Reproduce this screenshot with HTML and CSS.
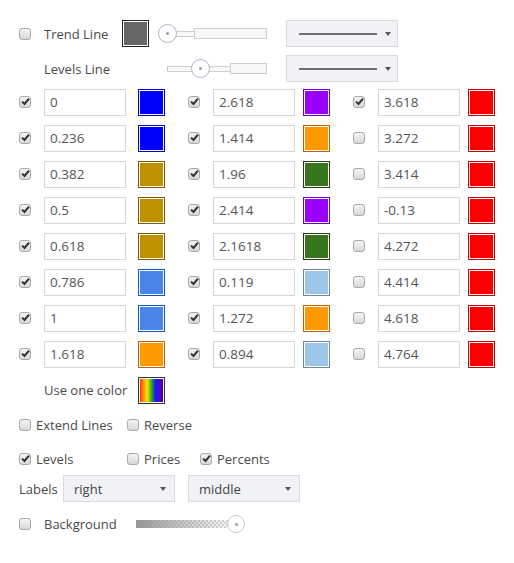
FILE: index.html
```html
<!DOCTYPE html>
<html>
<head>
<meta charset="utf-8">
<link rel="stylesheet" href="styles.css">
</head>
<body>
<div class="panel">
  <div class="row top-row">
    <span class="cb-cell"><span class="cb"></span></span>
    <span class="lbl lbl-trend">Trend Line</span>
    <span class="swatch sw-dark"></span>
    <div class="slider slider-trend">
      <div class="track"><span class="thin"></span><span class="wide"></span></div>
      <span class="thumb"><span class="dot"></span></span>
    </div>
    <div class="linesel"><span class="line"></span><span class="caret"></span></div>
  </div>
  <div class="row top-row row2">
    <span class="cb-cell"></span>
    <span class="lbl lbl-levels">Levels Line</span>
    <div class="slider slider-levels">
      <div class="track"><span class="thin"></span><span class="wide"></span></div>
      <span class="thumb"><span class="dot"></span></span>
    </div>
    <div class="linesel"><span class="line"></span><span class="caret"></span></div>
  </div>

  <div class="levels">
    <span class="cb on"></span><span class="num c1">0</span><span class="swatch sw-blue"></span>
    <span class="cb on"></span><span class="num">2.618</span><span class="swatch sw-purple"></span>
    <span class="cb on"></span><span class="num">3.618</span><span class="swatch sw-red"></span>

    <span class="cb on"></span><span class="num c1">0.236</span><span class="swatch sw-blue"></span>
    <span class="cb on"></span><span class="num">1.414</span><span class="swatch sw-orange"></span>
    <span class="cb"></span><span class="num">3.272</span><span class="swatch sw-red"></span>

    <span class="cb on"></span><span class="num c1">0.382</span><span class="swatch sw-gold"></span>
    <span class="cb on"></span><span class="num">1.96</span><span class="swatch sw-green"></span>
    <span class="cb"></span><span class="num">3.414</span><span class="swatch sw-red"></span>

    <span class="cb on"></span><span class="num c1">0.5</span><span class="swatch sw-gold"></span>
    <span class="cb on"></span><span class="num">2.414</span><span class="swatch sw-purple"></span>
    <span class="cb"></span><span class="num">-0.13</span><span class="swatch sw-red"></span>

    <span class="cb on"></span><span class="num c1">0.618</span><span class="swatch sw-gold"></span>
    <span class="cb on"></span><span class="num">2.1618</span><span class="swatch sw-green"></span>
    <span class="cb"></span><span class="num">4.272</span><span class="swatch sw-red"></span>

    <span class="cb on"></span><span class="num c1">0.786</span><span class="swatch sw-mblue"></span>
    <span class="cb on"></span><span class="num">0.119</span><span class="swatch sw-lblue"></span>
    <span class="cb"></span><span class="num">4.414</span><span class="swatch sw-red"></span>

    <span class="cb on"></span><span class="num c1">1</span><span class="swatch sw-mblue"></span>
    <span class="cb on"></span><span class="num">1.272</span><span class="swatch sw-orange"></span>
    <span class="cb"></span><span class="num">4.618</span><span class="swatch sw-red"></span>

    <span class="cb on"></span><span class="num c1">1.618</span><span class="swatch sw-orange"></span>
    <span class="cb on"></span><span class="num">0.894</span><span class="swatch sw-lblue"></span>
    <span class="cb"></span><span class="num">4.764</span><span class="swatch sw-red"></span>

    <span class="lbl one-color">Use one color</span><span class="swatch sw-rainbow"></span>
  </div>

  <div class="row opt-row extend-row">
    <label class="opt w108"><span class="cb"></span><span class="lbl">Extend Lines</span></label>
    <label class="opt"><span class="cb"></span><span class="lbl">Reverse</span></label>
  </div>
  <div class="row opt-row levels-row">
    <label class="opt w108"><span class="cb on"></span><span class="lbl">Levels</span></label>
    <label class="opt w73"><span class="cb"></span><span class="lbl">Prices</span></label>
    <label class="opt"><span class="cb on"></span><span class="lbl">Percents</span></label>
  </div>
  <div class="row labels-row">
    <span class="lbl lbl-labels">Labels</span>
    <div class="select"><span class="sel-text">right</span><span class="caret"></span></div>
    <div class="select sel2"><span class="sel-text">middle</span><span class="caret"></span></div>
  </div>
  <div class="row bg-row">
    <span class="cb-cell"><span class="cb"></span></span>
    <span class="lbl lbl-bg">Background</span>
    <div class="bgslider">
      <span class="bgtrack"></span>
      <span class="thumb bgthumb"><span class="dot"></span></span>
    </div>
  </div>
</div>
</body>
</html>
```

FILE: styles.css
```css
* { box-sizing: border-box; }

body {
  margin: 0;
  background: #ffffff;
  font-family: "Open Sans", "DejaVu Sans", sans-serif;
  font-size: 13px;
  color: #4a4a4a;
}

.panel {
  padding: 20px 0 0 19px;
}

.row {
  display: flex;
  align-items: center;
}

.top-row { height: 27px; }
.row2 { margin-top: 8px; }

.cb-cell {
  width: 25px;
  flex: none;
  display: flex;
  align-items: center;
}

.cb {
  display: inline-block;
  width: 12px;
  height: 12px;
  flex: none;
  border: 1px solid #a9a9a9;
  border-radius: 3px;
  background: linear-gradient(#f3f3f3, #d9d9d9);
  position: relative;
}

.cb.on::after {
  content: "";
  position: absolute;
  left: 1px;
  top: 0px;
  width: 9px;
  height: 9px;
  background: no-repeat center / 9px 9px url("data:image/svg+xml;utf8,<svg xmlns='http://www.w3.org/2000/svg' viewBox='0 0 9 9'><path d='M1 4.6 L3.5 7 L8 1.6' fill='none' stroke='%23333' stroke-width='2'/></svg>");
}

.lbl { white-space: nowrap; }
.lbl-trend { width: 78px; }
.lbl-levels { width: 123px; }

.swatch {
  display: inline-block;
  width: 27px;
  height: 27px;
  flex: none;
  border: 1px solid #333;
  box-shadow: inset 0 0 0 1px #fff;
}

.sw-dark { background: #666666; border-color: #222; }
.sw-blue { background: #0000ff; border-color: #0000cc; }
.sw-purple { background: #9900ff; border-color: #6a00cc; }
.sw-red { background: #ff0000; border-color: #cc0000; }
.sw-orange { background: #ff9900; border-color: #c65f00; }
.sw-gold { background: #bf9000; border-color: #7f5b00; }
.sw-green { background: #38761d; border-color: #1d400f; }
.sw-mblue { background: #4a86e8; border-color: #1155cc; }
.sw-lblue { background: #9fc5e8; border-color: #6887a8; }
.sw-rainbow {
  border-color: #333;
  background: linear-gradient(to right, #ff2a00 0%, #ff8c00 18%, #ffe600 32%, #3cba00 48%, #1018ff 66%, #5a00c8 84%, #3a0080 100%);
}

/* sliders */
.slider {
  position: relative;
  height: 19px;
  flex: none;
}

.slider-trend { width: 109px; margin-left: 9px; }
.slider-levels { width: 100px; }

.track {
  display: flex;
  align-items: center;
  height: 19px;
}

.thin {
  height: 6px;
  background: #f7f7f7;
  border: 1px solid #cfcfcf;
  border-right: none;
}

.wide {
  height: 11px;
  background: #f7f7f7;
  border: 1px solid #cfcfcf;
}

.slider-trend .track { padding-left: 9px; }
.slider-trend .thin { width: 27px; }
.slider-trend .wide { width: 73px; }
.slider-levels .thin { width: 63px; }
.slider-levels .wide { width: 37px; }

.thumb {
  position: absolute;
  top: 0;
  left: 0;
  width: 19px;
  height: 19px;
  border-radius: 50%;
  background: #fff;
  border: 1px solid #b0b6c6;
  display: flex;
  align-items: center;
  justify-content: center;
}

.slider-levels .thumb { left: 24px; }

.dot {
  width: 3px;
  height: 3px;
  border-radius: 50%;
  background: #9a9fae;
}

/* line style select */
.linesel {
  width: 112px;
  height: 27px;
  margin-left: 19px;
  background: #f1f2f6;
  border: 1px solid #dadbe0;
  display: flex;
  align-items: center;
  padding-left: 12px;
}

.linesel .line {
  width: 78px;
  height: 2px;
  background: #6e6e6e;
}

.caret {
  width: 0;
  height: 0;
  border-left: 3.5px solid transparent;
  border-right: 3.5px solid transparent;
  border-top: 4px solid #555;
}

.linesel .caret { margin-left: 8px; }

/* levels grid */
.levels {
  margin-top: 2px;
  display: grid;
  grid-template-columns: 25px 94px 50px 25px 90px 50px 25px 90px 27px;
  grid-auto-rows: 36px;
  align-items: center;
}

.num {
  width: 82px;
  height: 27px;
  border: 1px solid #d6d6d6;
  background: #fff;
  padding-left: 5px;
  line-height: 25px;
  color: #555;
  font-size: 13.5px;
}

.one-color { grid-column: 2; }

/* options */
.opt-row .opt {
  display: flex;
  align-items: center;
}

.opt .cb { margin-right: 5px; }
.w108 { width: 108px; }
.w73 { width: 73px; }

.extend-row { height: 34px; }
.levels-row { height: 33px; }

.labels-row { height: 27px; }
.lbl-labels { width: 44px; }

.select {
  width: 112px;
  height: 27px;
  background: #f1f2f6;
  border: 1px solid #dadbe0;
  display: flex;
  align-items: center;
  justify-content: space-between;
  padding: 0 8px 0 10px;
  color: #444;
}

.sel2 { margin-left: 13px; }

.bg-row { height: 24px; margin-top: 10px; }
.lbl-bg { width: 92px; }

.bgslider {
  position: relative;
  width: 110px;
  height: 18px;
  display: flex;
  align-items: center;
}

.bgtrack {
  width: 98px;
  height: 8px;
  background:
    linear-gradient(to right, rgba(150,150,150,1), rgba(150,150,150,0)),
    repeating-conic-gradient(#d6d6d6 0% 25%, #ffffff 0% 50%) 0 0 / 4px 4px;
}

.bgthumb {
  left: 91px;
  width: 18px;
  height: 18px;
  border-color: #c4c8d2;
}
```
